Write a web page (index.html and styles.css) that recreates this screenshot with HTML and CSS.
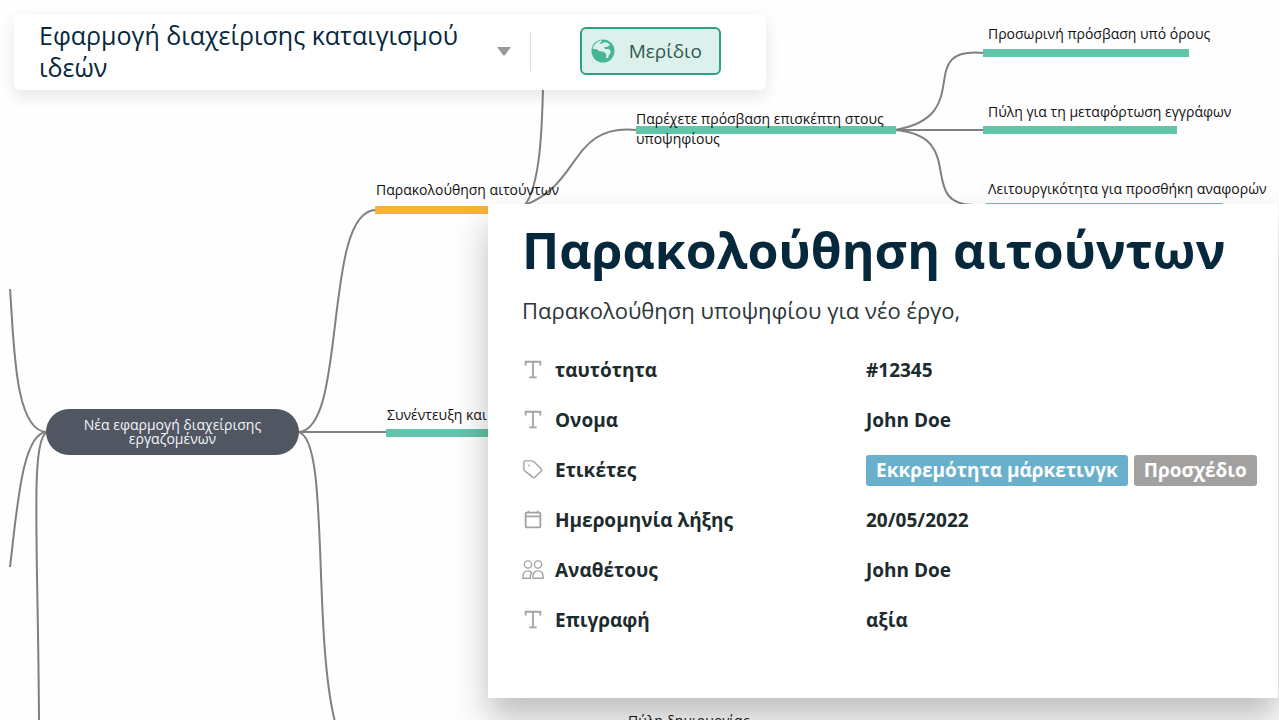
FILE: index.html
```html
<!DOCTYPE html>
<html lang="el">
<head>
<meta charset="utf-8">
<title>Εφαρμογή διαχείρισης καταιγισμού ιδεών</title>
<link rel="stylesheet" href="styles.css">
</head>
<body>
<main class="canvas">
  <svg class="links" width="1279" height="720" aria-hidden="true">
    <path d="M10 289C14 340 14 432 47 432"/>
    <path d="M47 432C22 432 17 510 10 567"/>
    <path d="M47 432C30 440 38 540 39 720"/>
    <path d="M298 432C348 432 322 210 376 210"/>
    <path d="M298 432H387"/>
    <path d="M298 432C330 436 312 630 335 722"/>
    <path d="M525 205C540 185 542 130 543 88"/>
    <path d="M525 205C582 184 570 123 637 130"/>
    <path d="M895 130C978 116 912 46 984 53"/>
    <path d="M895 130H984"/>
    <path d="M895 130C970 136 914 206 976 205"/>
  </svg>

  <div class="root-node">Νέα εφαρμογή διαχείρισης εργαζομένων</div>

  <div class="bar bar-amber n-track-bar"></div>
  <div class="label n-track">Παρακολούθηση αιτούντων</div>
  <div class="bar n-interview-bar"></div>
  <div class="label n-interview">Συνέντευξη και</div>
  <div class="bar n-guest-bar"></div>
  <div class="label n-guest">Παρέχετε πρόσβαση επισκέπτη στους υποψηφίους</div>
  <div class="bar n-temp-bar"></div>
  <div class="label n-temp">Προσωρινή πρόσβαση υπό όρους</div>
  <div class="bar n-upload-bar"></div>
  <div class="label n-upload">Πύλη για τη μεταφόρτωση εγγράφων</div>
  <div class="bar n-refs-bar"></div>
  <div class="label n-refs">Λειτουργικότητα για προσθήκη αναφορών</div>

  <header class="topbar">
    <h1 class="board-title">Εφαρμογή διαχείρισης καταιγισμού ιδεών</h1>
    <button class="menu-button" type="button" aria-label="Μενού"><svg width="14" height="10" viewBox="0 0 14 10"><path d="M0 0H14L8 8Q7 9 6 8Z" fill="#999"/></svg></button>
    <button class="share" type="button">
      <svg width="24" height="24" viewBox="0 0 24 24"><circle cx="12" cy="12" r="11.500" fill="#45b596"/><path d="M2 8Q5 3 10 1L11 3L8 4L10 5L14 3L17 4L19 6L16 8L13 8L14 10L18 10L20 13L18 16L17 19L15 19L15 15L13 13L8 12L5 10L2 10Z" fill="#dcf1eb"/><path d="M3 7Q6 4 9 5L11 7L9 9L5 9Z" fill="#dcf1eb"/></svg>
      Μερίδιο
    </button>
  </header>

  <article class="panel">
    <h2 class="panel-title">Παρακολούθηση αιτούντων</h2>
    <p class="panel-text">Παρακολούθηση υποψηφίου για νέο έργο,</p>
    <dl class="fields">
      <div class="field"><dt><svg class="icon" viewBox="0 0 24 24"><path class="bold" d="M4 7V3H20V7M12 3V20M8 20H16"/></svg>ταυτότητα</dt><dd>#12345</dd></div>
      <div class="field"><dt><svg class="icon" viewBox="0 0 24 24"><path class="bold" d="M4 7V3H20V7M12 3V20M8 20H16"/></svg>Ονομα</dt><dd>John Doe</dd></div>
      <div class="field"><dt><svg class="icon" viewBox="0 0 24 24"><path d="M3 2H11Q12 2 13 3L21 11Q22 12 21 13L14 20Q13 21 12 20L3 13Q2 12 2 11V3Q2 2 3 2Z"/><circle cx="7.500" cy="7" r="0.300"/></svg>Ετικέτες</dt><dd><span class="tag tag-blue">Εκκρεμότητα μάρκετινγκ</span><span class="tag tag-gray">Προσχέδιο</span></dd></div>
      <div class="field"><dt><svg class="icon" viewBox="0 0 24 24"><path class="bold" d="M4 5Q4 4 5 4H19Q20 4 20 5V19Q20 20 19 20H5Q4 20 4 19ZM4 8H20M7 2V4M17 2V4"/></svg>Ημερομηνία λήξης</dt><dd>20/05/2022</dd></div>
      <div class="field"><dt><svg class="icon" viewBox="0 0 24 24"><circle cx="6.500" cy="6" r="4"/><circle cx="17.500" cy="6" r="4"/><path d="M1 21V19Q1 13 6.500 13Q9 13 10.500 15Q9 17 9 21ZM12 21V19Q12 13 17.500 13Q23 13 23 19V21Z"/></svg>Αναθέτους</dt><dd>John Doe</dd></div>
      <div class="field"><dt><svg class="icon" viewBox="0 0 24 24"><path class="bold" d="M4 7V3H20V7M12 3V20M8 20H16"/></svg>Επιγραφή</dt><dd>αξία</dd></div>
    </dl>
  </article>
  <div class="label n-portal">Πύλη δημιουργίας</div>
</main>
</body>
</html>
```
FILE: styles.css
```css
* { box-sizing: border-box; }
body { margin: 0; background: #fefefe; font-family: "Open Sans", "Noto Sans", sans-serif; color: #1c2b2d; }
h1, h2, p, dl, dd { margin: 0; }
button { font: inherit; cursor: pointer; }
.canvas { position: relative; height: 100vh; overflow: hidden; }
.links { position: absolute; left: 0; top: 0; fill: none; stroke: #808080; stroke-width: 2; }

.root-node { position: absolute; left: 46px; top: 409px; width: 253px; height: 46px; padding: 0 32px; display: flex; align-items: center; border-radius: 23px; background: #505662; color: #f4f5f7; font-size: 14px; line-height: 14px; text-align: center; }
.label { position: absolute; font-size: 14px; line-height: 20px; color: #111; white-space: nowrap; }
.bar { position: absolute; height: 8px; background: #61c5a9; }
.bar-amber { background: #fab238; }
.n-track-bar { left: 375px; top: 206px; width: 150px; }
.n-track { left: 376px; top: 180px; }
.n-interview-bar { left: 386px; top: 429px; width: 150px; }
.n-interview { left: 387px; top: 405px; }
.n-guest-bar { left: 636px; top: 126px; width: 260px; }
.n-guest { left: 636px; top: 109px; width: 262px; white-space: normal; }
.n-temp-bar { left: 983px; top: 49px; width: 206px; }
.n-temp { left: 988px; top: 24px; }
.n-upload-bar { left: 983px; top: 126px; width: 194px; }
.n-upload { left: 988px; top: 102px; }
.n-refs-bar { left: 986px; top: 203px; width: 237px; }
.n-refs { left: 988px; top: 179px; }
.n-portal { left: 628px; top: 711px; }

.topbar { position: absolute; left: 14px; top: 14px; width: 752px; display: flex; align-items: center; padding: 5px 45px 7px 25px; border-radius: 6px; background: #fff; box-shadow: 0 6px 16px rgba(0, 0, 0, 0.1); }
.board-title { flex: 1; font-size: 25px; font-weight: 400; line-height: 32px; color: #06283d; }
.menu-button { display: flex; padding: 15px 19px 14px 0; margin-right: 49px; border: 0; border-right: 1px solid #ddd; background: none; }
.share { display: flex; align-items: center; gap: 14px; height: 48px; padding: 0 17px 0 9px; border: 2px solid #2fa183; border-radius: 6px; background: #dcf1eb; color: #32594f; font-size: 19px; }

.panel { position: absolute; left: 488px; right: 1px; top: 204px; padding: 14px 20px 53px 34px; background: #fff; box-shadow: 0 20px 32px rgba(0, 0, 0, 0.25); }
.panel-title { font-size: 50px; font-weight: 700; line-height: 64px; color: #06283d; white-space: nowrap; }
.panel-text { margin-top: 12px; font-size: 22px; line-height: 32px; color: #2b3638; }
.fields { margin-top: 19px; font-size: 19px; font-weight: 700; }
.field { display: grid; grid-template-columns: 344px 1fr; align-items: center; height: 50px; }
.field dt { display: flex; align-items: center; gap: 11px; }
.field dd { display: flex; gap: 6px; white-space: nowrap; }
.icon { width: 22px; height: 22px; fill: none; stroke: #a3a3a3; stroke-width: 1.5; }
.icon .bold { stroke-width: 2; }
.tag { padding: 0 10px; border-radius: 3px; line-height: 31px; color: #fff; }
.tag-blue { background: #69b0cd; }
.tag-gray { background: #a3a19f; }
```
